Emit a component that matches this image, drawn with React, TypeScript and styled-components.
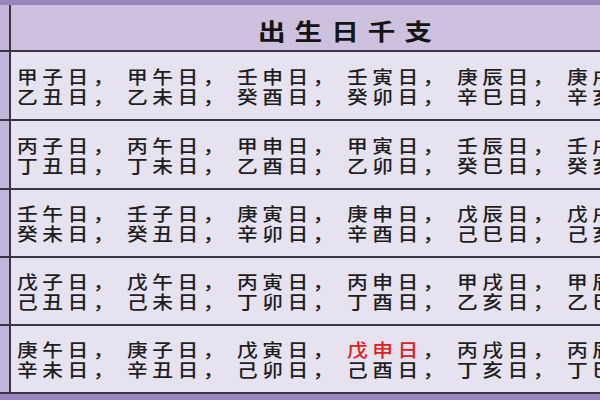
import React from "react";
import styled, { createGlobalStyle } from "styled-components";

const Global = createGlobalStyle`
  html, body { margin: 0; padding: 0; background: #9a86bf; }
  body { font-family: "Noto Sans CJK SC", "Noto Sans", sans-serif; }
`;

const Frame = styled.div`
  width: 600px;
  height: 400px;
  overflow: hidden;
  background: #9a86bf;
  padding-top: 5px;
  box-sizing: border-box;
  display: flex;
  flex-direction: column;
`;

const Row = styled.div<{ $h: number }>`
  display: flex;
  height: ${(p) => p.$h}px;
  flex: 0 0 auto;
  border-bottom: 2px solid #3a3444;
`;

const Side = styled.div`
  width: 9px;
  flex: 0 0 9px;
  background: #c4b5db;
`;

const HeaderCell = styled.div`
  flex: 1;
  border-left: 2px solid #3a3444;
  background: #cdc1df;
  display: flex;
  align-items: center;
  padding: 5px 0 0 247px;
  box-sizing: border-box;
  overflow: hidden;
`;

const Title = styled.h1`
  margin: 0;
  font-size: 23px;
  font-weight: 700;
  letter-spacing: 7.5px;
  color: #141414;
  line-height: 26px;
  white-space: nowrap;
  transform: scaleX(1.2);
  transform-origin: left center;
`;

const BodyCell = styled.div`
  flex: 1;
  border-left: 2px solid #3a3444;
  background: #e6e2ef;
  display: flex;
  flex-direction: column;
  justify-content: center;
  padding-left: 6px;
  overflow: hidden;
`;

const Line = styled.div`
  display: grid;
  grid-template-columns: repeat(6, 95.65px);
  height: 20px;
  line-height: 20px;
  font-size: 18px;
  font-weight: 500;
  letter-spacing: 4px;
  color: #1e1e1e;
  white-space: nowrap;
  transform: scaleX(1.15);
  transform-origin: left center;
`;

const Item = styled.span<{ $red?: boolean }>`
  color: ${(p) => (p.$red ? "#e0201c" : "inherit")};
`;

type Entry = string;

const rows: { h: number; lines: [Entry[], Entry[]] }[] = [
  {
    h: 67,
    lines: [
      ["甲子日", "甲午日", "壬申日", "壬寅日", "庚辰日", "庚戌日"],
      ["乙丑日", "乙未日", "癸酉日", "癸卯日", "辛巳日", "辛亥日"],
    ],
  },
  {
    h: 67,
    lines: [
      ["丙子日", "丙午日", "甲申日", "甲寅日", "壬辰日", "壬戌日"],
      ["丁丑日", "丁未日", "乙酉日", "乙卯日", "癸巳日", "癸亥日"],
    ],
  },
  {
    h: 66,
    lines: [
      ["壬午日", "壬子日", "庚寅日", "庚申日", "戊辰日", "戊戌日"],
      ["癸未日", "癸丑日", "辛卯日", "辛酉日", "己巳日", "己亥日"],
    ],
  },
  {
    h: 66,
    lines: [
      ["戊子日", "戊午日", "丙寅日", "丙申日", "甲戌日", "甲辰日"],
      ["己丑日", "己未日", "丁卯日", "丁酉日", "乙亥日", "乙巳日"],
    ],
  },
  {
    h: 66,
    lines: [
      ["庚午日", "庚子日", "戊寅日", "戊申日", "丙戌日", "丙辰日"],
      ["辛未日", "辛丑日", "己卯日", "己酉日", "丁亥日", "丁巳日"],
    ],
  },
];

export default function App() {
  return (
    <>
      <Global />
      <Frame>
        <Row $h={45}>
          <Side />
          <HeaderCell>
            <Title>出生日千支</Title>
          </HeaderCell>
        </Row>
        {rows.map((r, ri) => (
          <Row $h={r.h} key={ri}>
            <Side />
            <BodyCell>
              {r.lines.map((line, li) => (
                <Line key={li}>
                  {line.map((d, di) => (
                    <span key={di}>
                      <Item $red={ri === 4 && li === 0 && d === "戊申日"}>{d}</Item>，
                    </span>
                  ))}
                </Line>
              ))}
            </BodyCell>
          </Row>
        ))}
      </Frame>
    </>
  );
}
